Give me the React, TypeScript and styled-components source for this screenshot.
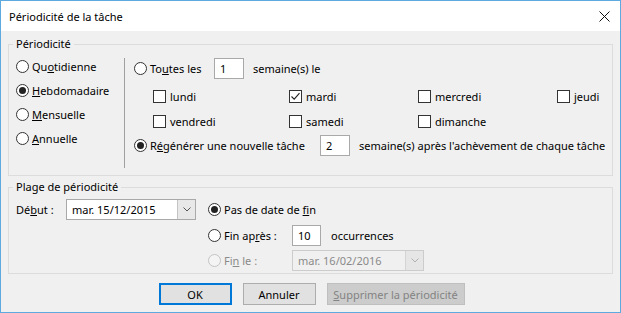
import * as React from 'react';
import styled, { createGlobalStyle } from 'styled-components';

const GlobalStyle = createGlobalStyle`
	html, body { margin: 0; padding: 0; background: #ffffff; }
	body {
		font-family: "Noto Sans", "Liberation Sans", sans-serif;
		font-size: 11px;
		color: #000000;
	}
	* { box-sizing: border-box; }
`;

const Window = styled.div`
	width: 621px;
	height: 313px;
	border: 1px solid #5ea9de;
	background: #f0f0f0;
	display: flex;
	flex-direction: column;
	overflow: hidden;
`;

const TitleBar = styled.div`
	height: 30px;
	background: #ffffff;
	display: flex;
	align-items: center;
	justify-content: space-between;
	padding: 0 10px 0 8px;
	font-size: 11px;
`;

const Body = styled.div`
	flex: 1;
	display: flex;
	flex-direction: column;
	padding: 6px 7px 0 7px;
`;

const Group = styled.fieldset<{ $gap?: number }>`
	margin: ${(p) => p.$gap || 0}px 0 0 0;
	padding: 0;
	border: 1px solid #dcdcdc;
	min-width: 0;
`;

const Legend = styled.legend`
	margin-left: 4px;
	padding: 0 3px;
	line-height: 14px;
	font-size: 11px;
`;

const GroupRow = styled.div<{ $pt: number }>`
	display: flex;
	padding-top: ${(p) => p.$pt}px;
`;

const KindColumn = styled.div`
	width: 115px;
	padding: 3px 0 0 7px;
	display: flex;
	flex-direction: column;
`;

const Separator = styled.div`
	width: 1px;
	background: #a0a0a0;
	margin: 7px 0;
`;

const PatternColumn = styled.div`
	flex: 1;
	padding: 6px 0 19px 9px;
	display: flex;
	flex-direction: column;
`;

const Line = styled.div<{ $h: number }>`
	height: ${(p) => p.$h}px;
	display: flex;
	align-items: center;
	white-space: nowrap;
`;

const DayGrid = styled.div`
	display: grid;
	grid-template-columns: 136px 129px 139px auto;
	grid-template-rows: 25px 25px;
	padding-left: 19px;
	margin-top: 5px;
`;

const Option = styled.label<{ $disabled?: boolean; $width?: number }>`
	display: flex;
	align-items: center;
	gap: 3px;
	white-space: nowrap;
	color: ${(p) => (p.$disabled ? '#8a8a8a' : '#000000')};
	${(p) => (p.$width ? `width: ${p.$width}px;` : '')}
`;

const Circle = styled.span<{ $disabled?: boolean }>`
	width: 13px;
	height: 13px;
	border-radius: 50%;
	border: 1px solid ${(p) => (p.$disabled ? '#c4c4c4' : '#333333')};
	background: ${(p) => (p.$disabled ? '#f4f4f4' : '#ffffff')};
	display: flex;
	align-items: center;
	justify-content: center;
	flex: none;
`;

const Dot = styled.span`
	width: 7px;
	height: 7px;
	border-radius: 50%;
	background: #222222;
`;

const Box = styled.span`
	width: 13px;
	height: 13px;
	border: 1px solid #333333;
	background: #ffffff;
	display: flex;
	align-items: center;
	justify-content: center;
	flex: none;
	margin-right: 1px;
`;

const NumberField = styled.div<{ $w: number; $mr: number }>`
	width: ${(p) => p.$w}px;
	height: 21px;
	margin-right: ${(p) => p.$mr}px;
	border: 1px solid #a9a9a9;
	background: #ffffff;
	display: flex;
	align-items: center;
	padding-left: 5px;
`;

const Combo = styled.div<{ $w: number; $disabled?: boolean }>`
	width: ${(p) => p.$w}px;
	height: 21px;
	display: flex;
	border: 1px solid ${(p) => (p.$disabled ? '#cccccc' : '#a9a9a9')};
	background: ${(p) => (p.$disabled ? '#f0f0f0' : '#ffffff')};
	color: ${(p) => (p.$disabled ? '#8a8a8a' : '#000000')};
`;

const ComboText = styled.div`
	flex: 1;
	display: flex;
	align-items: center;
	padding-left: 5px;
`;

const ComboButton = styled.div<{ $disabled?: boolean }>`
	width: 18px;
	border-left: 1px solid ${(p) => (p.$disabled ? '#d4d4d4' : '#c4c4c4')};
	background: ${(p) => (p.$disabled ? '#e6e6e6' : '#e8e8e8')};
	display: flex;
	align-items: center;
	justify-content: center;
`;

const RangeLeft = styled.div`
	display: flex;
	align-items: center;
	height: 26px;
	padding-left: 7px;
`;

const StartLabel = styled.span`
	width: 50px;
`;

const RangeGrid = styled.div`
	margin-left: 12px;
	display: grid;
	grid-template-columns: 84px auto;
	grid-template-rows: 26px 26px 25px;
	align-items: center;
`;

const Wide = styled.div`
	grid-column: 1 / 3;
`;

const Cell = styled.div`
	display: flex;
	align-items: center;
`;

const Buttons = styled.div`
	display: flex;
	justify-content: center;
	gap: 11px;
	margin-top: 9px;
	padding-left: 2px;
`;

const Button = styled.button<{ $w: number; $variant?: 'default' | 'disabled' }>`
	width: ${(p) => p.$w}px;
	height: 22px;
	font-family: inherit;
	font-size: 11px;
	padding: 0;
	background: ${(p) => (p.$variant === 'disabled' ? '#cccccc' : '#e1e1e1')};
	color: ${(p) => (p.$variant === 'disabled' ? '#838383' : '#000000')};
	border: ${(p) =>
		p.$variant === 'default'
			? '2px solid #0078d7'
			: p.$variant === 'disabled'
				? '1px solid #bfbfbf'
				: '1px solid #adadad'};
`;

const Radio = ({ checked, disabled, children, width }: { checked?: boolean; disabled?: boolean; children: React.ReactNode; width?: number }) => (
	<Option $disabled={disabled} $width={width}>
		<Circle $disabled={disabled}>{checked && <Dot />}</Circle>
		<span>{children}</span>
	</Option>
);

const Check = ({ checked, children }: { checked?: boolean; children: React.ReactNode }) => (
	<Option>
		<Box>
			{checked && (
				<svg width="11" height="11" viewBox="0 0 11 11">
					<path d="M1.5 5.5 L4.2 8.2 L9.5 2.2" fill="none" stroke="#222" strokeWidth="1.1" />
				</svg>
			)}
		</Box>
		<span>{children}</span>
	</Option>
);

const Chevron = ({ color }: { color: string }) => (
	<svg width="8" height="5" viewBox="0 0 8 5">
		<path d="M0.5 0.5 L4 4 L7.5 0.5" fill="none" stroke={color} strokeWidth="1" />
	</svg>
);

const days: [string, boolean][] = [
	['lundi', false],
	['mardi', true],
	['mercredi', false],
	['jeudi', false],
	['vendredi', false],
	['samedi', false],
	['dimanche', false]
];

export default function App() {
	return (
		<>
			<GlobalStyle />
			<Window>
				<TitleBar>
					<span>Périodicité de la tâche</span>
					<svg width="11" height="11" viewBox="0 0 11 11">
						<path d="M0.5 0.5 L10.5 10.5 M10.5 0.5 L0.5 10.5" stroke="#111" strokeWidth="1" />
					</svg>
				</TitleBar>
				<Body>
					<Group>
						<Legend>Périodicité</Legend>
						<GroupRow $pt={0}>
							<KindColumn>
								<Line $h={24}>
									<Radio>
										Qu<u>o</u>tidienne
									</Radio>
								</Line>
								<Line $h={24}>
									<Radio checked>
										<u>H</u>ebdomadaire
									</Radio>
								</Line>
								<Line $h={24}>
									<Radio>
										<u>M</u>ensuelle
									</Radio>
								</Line>
								<Line $h={24}>
									<Radio>
										<u>A</u>nnuelle
									</Radio>
								</Line>
							</KindColumn>
							<Separator />
							<PatternColumn>
								<Line $h={22}>
									<Radio width={80}>
										To<u>u</u>tes les
									</Radio>
									<NumberField $w={30} $mr={9}>1</NumberField>
									<span>semaine(s) le</span>
								</Line>
								<DayGrid>
									{days.map(([d, c]) => (
										<Cell key={d}>
											<Check checked={c}>{d}</Check>
										</Cell>
									))}
								</DayGrid>
								<Line $h={22}>
									<Radio checked width={186}>
										R<u>é</u>générer une nouvelle tâche
									</Radio>
									<NumberField $w={30} $mr={9}>2</NumberField>
									<span>semaine(s) après l'achèvement de chaque tâche</span>
								</Line>
							</PatternColumn>
						</GroupRow>
					</Group>
					<Group $gap={4}>
						<Legend>Plage de périodicité</Legend>
						<GroupRow $pt={2}>
							<RangeLeft>
								<StartLabel>
									Dé<u>b</u>ut :
								</StartLabel>
								<Combo $w={130}>
									<ComboText>mar. 15/12/2015</ComboText>
									<ComboButton>
										<Chevron color="#555" />
									</ComboButton>
								</Combo>
							</RangeLeft>
							<RangeGrid>
								<Wide>
									<Radio checked>
										Pas de date de <u>f</u>in
									</Radio>
								</Wide>
								<Radio>
									Fin ap<u>r</u>ès :
								</Radio>
								<Cell>
									<NumberField $w={29} $mr={10}>10</NumberField>
									<span>occurrences</span>
								</Cell>
								<Radio disabled>
									Fi<u>n</u> le :
								</Radio>
								<Cell>
									<Combo $w={132} $disabled>
										<ComboText>mar. 16/02/2016</ComboText>
										<ComboButton $disabled>
											<Chevron color="#b0b0b0" />
										</ComboButton>
									</Combo>
								</Cell>
							</RangeGrid>
						</GroupRow>
					</Group>
					<Buttons>
						<Button $w={73} $variant="default">OK</Button>
						<Button $w={73}>Annuler</Button>
						<Button $w={138} $variant="disabled">
							<u>S</u>upprimer la périodicité
						</Button>
					</Buttons>
				</Body>
			</Window>
		</>
	);
}
